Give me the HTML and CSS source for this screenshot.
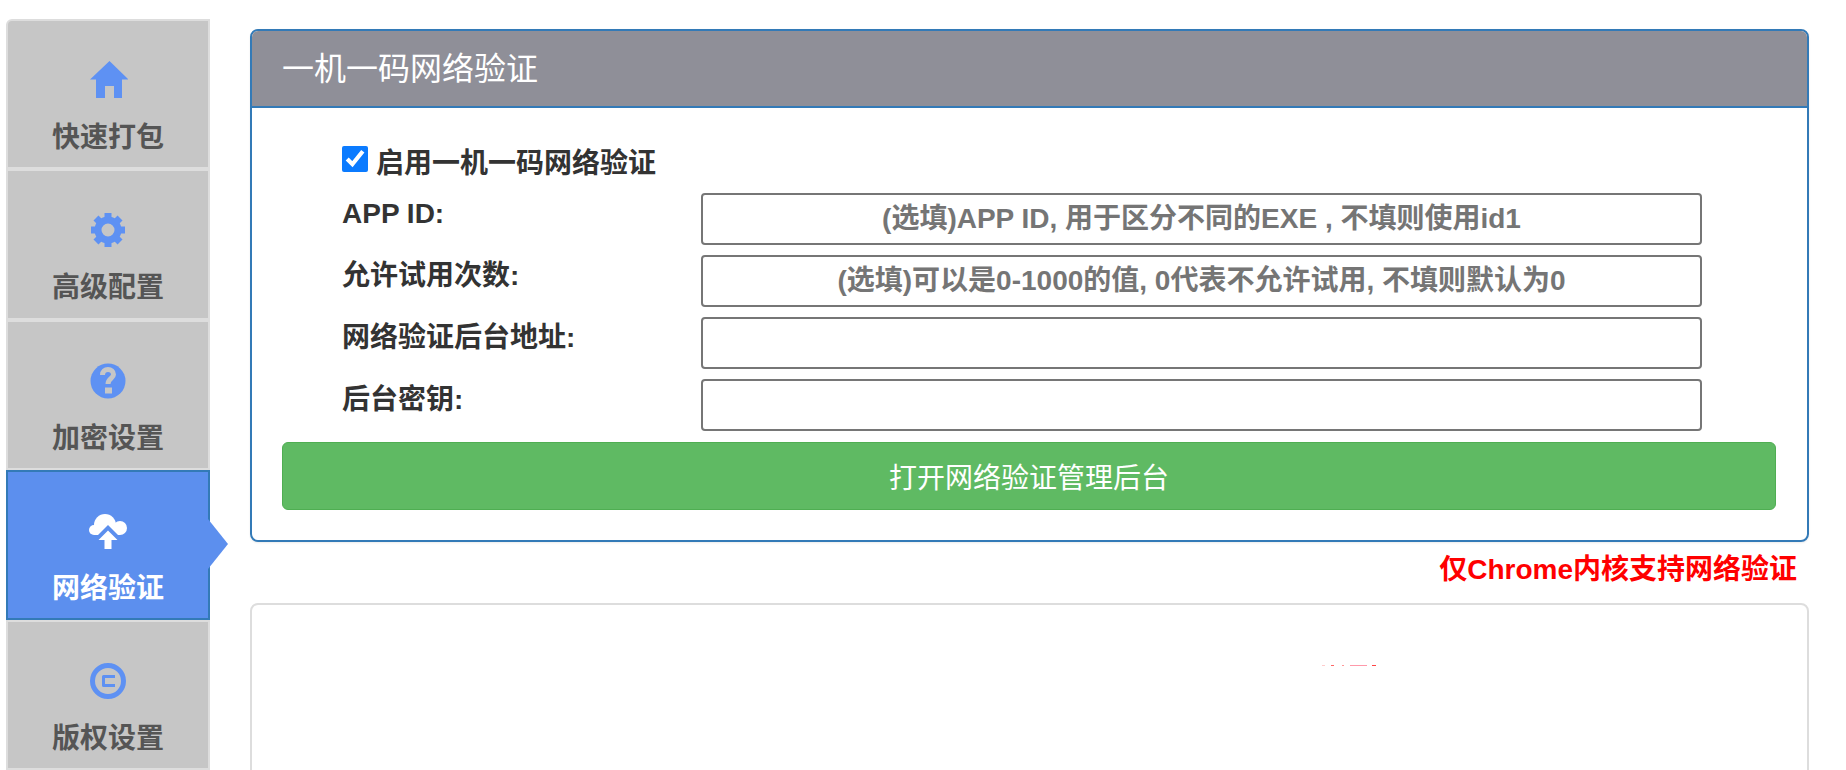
FILE: index.html
```html
<!DOCTYPE html>
<html lang="zh-CN">
<head>
    <meta charset="UTF-8">
    <meta name="viewport" content="width=device-width, initial-scale=1.0">
    <title>一机一码网络验证</title>
    <link rel="stylesheet" href="styles.css">
</head>
<body>
    <div class="page">
        <ul class="nav">
            <li class="nav-item">
                <svg class="nav-icon" viewBox="0 0 40 40">
                    <polygon points="21.5,1 40.5,19.5 34,19.5 34,38 26,38 26,26 17,26 17,38 8,38 8,19.5 2,19.5"/>
                </svg>
                <span>快速打包</span>
            </li>
            <li class="nav-item">
                <svg class="nav-icon" viewBox="0 0 40 40">
                    <circle class="gear-ring" cx="20" cy="20" r="10"/>
                    <rect x="16.5" y="3" width="7" height="7"/>
                    <rect x="16.5" y="3" width="7" height="7" transform="rotate(45 20 20)"/>
                    <rect x="16.5" y="3" width="7" height="7" transform="rotate(90 20 20)"/>
                    <rect x="16.5" y="3" width="7" height="7" transform="rotate(135 20 20)"/>
                    <rect x="16.5" y="3" width="7" height="7" transform="rotate(180 20 20)"/>
                    <rect x="16.5" y="3" width="7" height="7" transform="rotate(225 20 20)"/>
                    <rect x="16.5" y="3" width="7" height="7" transform="rotate(270 20 20)"/>
                    <rect x="16.5" y="3" width="7" height="7" transform="rotate(315 20 20)"/>
                </svg>
                <span>高级配置</span>
            </li>
            <li class="nav-item">
                <svg class="nav-icon" viewBox="0 0 40 40">
                    <circle cx="20" cy="20" r="17.5"/>
                    <path class="question-mark" d="M14.5 14c0-3.5 2.5-5.5 5.5-5.5s5.5 2 5.5 5c0 4-5.5 4-5.5 9.5"/>
                    <rect class="question-dot" x="17" y="26.5" width="7" height="6"/>
                </svg>
                <span>加密设置</span>
            </li>
            <li class="nav-item active">
                <svg class="nav-icon" viewBox="0 0 40 40">
                    <circle cx="17" cy="14" r="11"/>
                    <circle cx="6" cy="19" r="5"/>
                    <circle cx="32" cy="17" r="7"/>
                    <rect x="6" y="14" width="26" height="10"/>
                    <polygon class="cloud-cut" points="20,14 38,32 2,32"/>
                    <polygon points="20,19.5 29.5,29 23.5,29 23.5,38 16.5,38 16.5,29 10.5,29"/>
                </svg>
                <span>网络验证</span>
            </li>
            <li class="nav-item">
                <svg class="nav-icon" viewBox="0 0 40 40">
                    <circle class="copy-ring" cx="20" cy="20" r="15.5"/>
                    <path class="copy-c" d="M27 15.5H15.5v9H27"/>
                </svg>
                <span>版权设置</span>
            </li>
        </ul>

        <div class="main">
            <div class="panel">
                <div class="panel-heading">一机一码网络验证</div>
                <div class="panel-body">
                    <label class="check-row">
                        <input type="checkbox" checked>
                        <span>启用一机一码网络验证</span>
                    </label>
                    <div class="form-row">
                        <label>APP ID:</label>
                        <input type="text" placeholder="(选填)APP ID, 用于区分不同的EXE , 不填则使用id1">
                    </div>
                    <div class="form-row">
                        <label>允许试用次数:</label>
                        <input type="text" placeholder="(选填)可以是0-1000的值, 0代表不允许试用, 不填则默认为0">
                    </div>
                    <div class="form-row">
                        <label>网络验证后台地址:</label>
                        <input type="text">
                    </div>
                    <div class="form-row">
                        <label>后台密钥:</label>
                        <input type="text">
                    </div>
                    <button class="button">打开网络验证管理后台</button>
                </div>
            </div>
            <p class="note">仅Chrome内核支持网络验证</p>
            <div class="panel-empty"><i class="streak"></i></div>
        </div>
    </div>
</body>
</html>
```

FILE: styles.css
```css
html, body {
    margin: 0;
    height: 770px;
    overflow: hidden;
}
body {
    font-family: "Liberation Sans", "Noto Sans CJK SC", sans-serif;
    font-size: 28px;
    color: #333;
    background-color: #fff;
}
.page {
    display: flex;
    align-items: flex-start;
    padding: 19px 0 0 6px;
}

/* left tabs */
.nav {
    list-style: none;
    margin: 0;
    padding: 0;
    width: 204px;
    flex-shrink: 0;
}
.nav-item {
    position: relative;
    box-sizing: border-box;
    height: 150.3px;
    padding-top: 39px;
    display: flex;
    flex-direction: column;
    align-items: center;
    gap: 20px;
    background-color: #c6c6c6;
    border: 2px solid #ddd;
    color: #555;
    font-weight: bold;
    line-height: 36px;
}
.nav-item:first-child {
    border-top-left-radius: 6px;
}
.nav-icon {
    width: 40px;
    height: 40px;
    fill: #5e91f3;
}
.gear-ring {
    fill: none;
    stroke: #5e91f3;
    stroke-width: 7;
}
.question-mark {
    fill: none;
    stroke: #c6c6c6;
    stroke-width: 5;
}
.question-dot {
    fill: #c6c6c6;
}
.copy-ring {
    fill: none;
    stroke: #5e91f3;
    stroke-width: 5;
}
.copy-c {
    fill: none;
    stroke: #5e91f3;
    stroke-width: 3;
    stroke-linejoin: round;
}
.nav-item.active {
    background-color: #5c8fee;
    border-color: #337ab7;
    color: #fff;
}
.nav-item.active .nav-icon {
    fill: #fff;
}
.nav-item.active .cloud-cut {
    fill: #5c8fee;
}
.nav-item.active:after {
    content: "";
    position: absolute;
    left: 200px;
    top: 47px;
    border-left: 20px solid #5c8fee;
    border-top: 25px solid transparent;
    border-bottom: 25px solid transparent;
}

/* main column */
.main {
    width: 1559px;
    margin: 10px 0 0 40px;
}
.panel {
    box-sizing: border-box;
    height: 513px;
    border: 2px solid #337ab7;
    border-radius: 8px;
    box-shadow: 0 1px 2px rgba(0, 0, 0, 0.08);
    overflow: hidden;
}
.panel-heading {
    height: 75px;
    padding-left: 30px;
    line-height: 76px;
    font-size: 32px;
    color: #fff;
    background-color: #8f8f98;
    border-bottom: 2px solid #337ab7;
}
.panel-body {
    padding: 38px 31px 0 30px;
}
.check-row,
.form-row {
    display: flex;
    margin-left: 60px;
    font-weight: bold;
}
.check-row {
    align-items: center;
    gap: 8px;
    height: 26px;
    margin-bottom: 21px;
}
.check-row span {
    padding-top: 3px;
}
.check-row input {
    width: 26px;
    height: 26px;
    margin: 0;
    accent-color: #0b7bff;
}
.form-row {
    margin-bottom: 10px;
}
.form-row label {
    width: 359px;
    flex-shrink: 0;
    line-height: 41px;
}
.form-row input {
    box-sizing: border-box;
    width: 1001px;
    height: 52px;
    padding: 0 10px;
    border: 2px solid #767676;
    border-radius: 4px;
    font-family: inherit;
    font-size: 28px;
    font-weight: bold;
    text-align: center;
}
.form-row input::placeholder {
    color: #757575;
}
.button {
    display: block;
    width: 100%;
    height: 68px;
    margin-top: 11px;
    padding: 0;
    font-family: inherit;
    font-size: 28px;
    color: #fff;
    background-color: #5fba63;
    border: 1px solid #4fae52;
    border-radius: 6px;
}
.note {
    margin: 10px 12px 0 0;
    height: 51px;
    line-height: 36px;
    text-align: right;
    font-size: 28px;
    font-weight: bold;
    color: #f00;
}
.panel-empty {
    position: relative;
    box-sizing: border-box;
    height: 300px;
    border: 2px solid #ddd;
    border-radius: 8px;
}
/* leftover sliver of text in the empty box */
.streak {
    position: absolute;
    left: 1070px;
    top: 60px;
    width: 54px;
    height: 1px;
    background: linear-gradient(to right,
        #fcc 0 3px, transparent 3px 9px,
        #f66 9px 12px, transparent 12px 20px,
        #f99 20px 22px, transparent 22px 28px,
        #f9a 28px 45px, transparent 45px 50px,
        #f44 50px 54px);
}
```
